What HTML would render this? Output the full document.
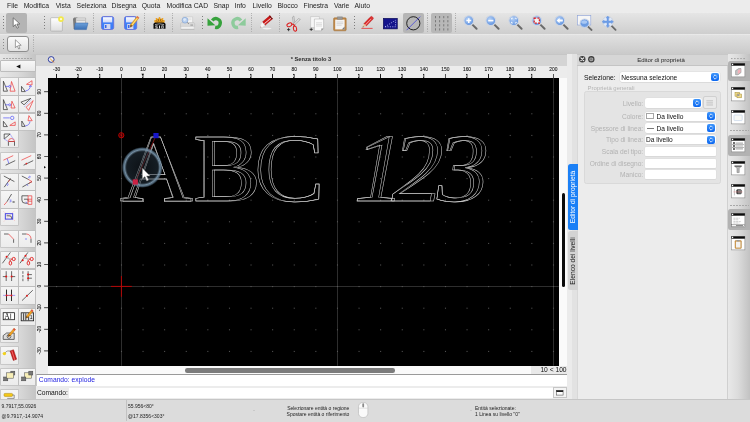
<!DOCTYPE html>
<html lang="it"><head><meta charset="utf-8"><title>Senza titolo 3</title>
<style>
*{margin:0;padding:0;box-sizing:border-box}
html,body{width:750px;height:422px;overflow:hidden;background:#ececec}
body{position:relative;will-change:transform;font-family:"Liberation Sans",sans-serif;color:#1a1a1a;font-size:6.7px;line-height:1}
.a{position:absolute}
.t{position:absolute;white-space:nowrap;line-height:1}
svg{position:absolute;overflow:visible}
.menu span{position:absolute;top:3.4px;font-size:6.8px;color:#222;white-space:nowrap}
.tb{position:absolute;background:linear-gradient(#f5f5f5,#ececec);width:16.5px;height:16.3px;box-shadow:0 0 0 0.7px #bcbcbc}
.sep{position:absolute;width:1px;height:20px;top:13px;background:repeating-linear-gradient(#b2b2b2 0 1.2px,transparent 1.2px 2.2px)}
.sel{position:absolute;background:#b6b6b6;border-radius:2px}
.inp{position:absolute;background:#fff;border-radius:1.5px;box-shadow:0 0 0 0.5px #dcdcdc, 0 0.5px 0.5px #c8c8c8}
.bl{position:absolute;background:linear-gradient(#3f96fb,#0a66f0);border-radius:2px;width:8.2px;height:8px}
.lbl{position:absolute;color:#b2b2b2;font-size:6.6px;text-align:right;white-space:nowrap}
.val{position:absolute;color:#111;font-size:6.6px;white-space:nowrap}
.st{position:absolute;font-size:5px;color:#222;white-space:nowrap}
</style></head>
<body>
<div class="a menu" style="left:0;top:0;width:750px;height:12px;background:#ececec"><span style="left:7px">File</span><span style="left:23.7px">Modifica</span><span style="left:55.7px">Vista</span><span style="left:76.6px">Seleziona</span><span style="left:111.6px">Disegna</span><span style="left:141.7px">Quota</span><span style="left:166.5px">Modifica CAD</span><span style="left:213.5px">Snap</span><span style="left:234.5px">Info</span><span style="left:252.5px">Livello</span><span style="left:277.5px">Blocco</span><span style="left:303.5px">Finestra</span><span style="left:334px">Varie</span><span style="left:354.5px">Aiuto</span></div>
<div class="a" style="left:0;top:12px;width:750px;height:22.4px;background:linear-gradient(#f2f2f2 0,#e5e5e5 5%,#cecece)"></div>
<div class="a" style="left:0;top:34.4px;width:750px;height:19.4px;background:linear-gradient(#eeeeee 0,#e0e0e0 6%,#cacaca)"></div>
<div class="sel" style="left:6px;top:12.6px;width:21.4px;height:20.6px;background:#b4b4b4"></div>
<svg style="left:12px;top:16.5px" width="10" height="12" viewBox="0 0 10 12"><path d="M1.2 0.8v8.8l2.2-2 1.6 3.6 1.5-0.7-1.6-3.5h3z" fill="#fff" stroke="#555" stroke-width="0.7" stroke-linejoin="round"/></svg>
<div class="sep" style="left:93.4px"></div>
<div class="sep" style="left:144.3px"></div>
<div class="sep" style="left:172.3px"></div>
<div class="sep" style="left:250.7px"></div>
<div class="sep" style="left:278.7px"></div>
<div class="sep" style="left:427.0px"></div>
<div class="sep" style="left:455.3px"></div>
<svg style="left:2px;top:16px" width="3" height="14" viewBox="0 0 3 14"><rect x="1" y="0" width="1" height="1" fill="#7e7e7e"/><rect x="1" y="3" width="1" height="1" fill="#7e7e7e"/><rect x="1" y="6" width="1" height="1" fill="#7e7e7e"/><rect x="1" y="9" width="1" height="1" fill="#7e7e7e"/><rect x="1" y="12" width="1" height="1" fill="#7e7e7e"/></svg>
<svg style="left:43px;top:16px" width="3" height="14" viewBox="0 0 3 14"><rect x="1" y="0" width="1" height="1" fill="#7e7e7e"/><rect x="1" y="3" width="1" height="1" fill="#7e7e7e"/><rect x="1" y="6" width="1" height="1" fill="#7e7e7e"/><rect x="1" y="9" width="1" height="1" fill="#7e7e7e"/><rect x="1" y="12" width="1" height="1" fill="#7e7e7e"/></svg>
<svg style="left:201px;top:16px" width="3" height="14" viewBox="0 0 3 14"><rect x="1" y="0" width="1" height="1" fill="#7e7e7e"/><rect x="1" y="3" width="1" height="1" fill="#7e7e7e"/><rect x="1" y="6" width="1" height="1" fill="#7e7e7e"/><rect x="1" y="9" width="1" height="1" fill="#7e7e7e"/><rect x="1" y="12" width="1" height="1" fill="#7e7e7e"/></svg>
<svg style="left:353px;top:16px" width="3" height="14" viewBox="0 0 3 14"><rect x="1" y="0" width="1" height="1" fill="#7e7e7e"/><rect x="1" y="3" width="1" height="1" fill="#7e7e7e"/><rect x="1" y="6" width="1" height="1" fill="#7e7e7e"/><rect x="1" y="9" width="1" height="1" fill="#7e7e7e"/><rect x="1" y="12" width="1" height="1" fill="#7e7e7e"/></svg>
<svg style="left:50.3px;top:15.6px" width="14.4" height="16" viewBox="0 0 13.5 15"><defs><linearGradient id="pg" x1="0" y1="0" x2="0" y2="1"><stop offset="0" stop-color="#ffffff"/><stop offset="1" stop-color="#dedede"/></linearGradient></defs><rect x="0.6" y="1.6" width="11" height="12.6" rx="0.8" fill="url(#pg)" stroke="#a8a8a8" stroke-width="0.6"/><circle cx="10.3" cy="2.9" r="2.7" fill="#f2e84a"/><circle cx="10.3" cy="2.9" r="1.1" fill="#fffbd0"/></svg>
<svg style="left:72px;top:15.6px" width="17" height="15.2" viewBox="0 0.4 17 13.2"><defs><linearGradient id="fo" x1="0" y1="0" x2="0" y2="1"><stop offset="0" stop-color="#6ea2dc"/><stop offset="1" stop-color="#3a6fb4"/></linearGradient></defs><path d="M1 2.2l1.2-1.2h3l1 1v10.5h-4.6z" fill="#7b7b7b"/><path d="M4 1.4h9.6v6h-9.6z" fill="#e6e6e6" stroke="#9a9a9a" stroke-width="0.5"/><path d="M4.4 3h8.8v1.2h-8.8z" fill="#bdbdbd"/><path d="M3.2 6.4h12.8l-1.6 6.6h-12z" fill="url(#fo)" stroke="#3565a6" stroke-width="0.5"/></svg>
<svg style="left:101px;top:15.8px" width="13.2" height="14" viewBox="0 0 13.2 14"><defs><linearGradient id="fl101" x1="0" y1="0" x2="0" y2="1"><stop offset="0" stop-color="#4a84f6"/><stop offset="1" stop-color="#3a7cf8"/></linearGradient><linearGradient id="fw101" x1="0" y1="0" x2="0" y2="1"><stop offset="0" stop-color="#fbfbff"/><stop offset="1" stop-color="#cfd8f8"/></linearGradient></defs><rect x="0.5" y="0.5" width="12.2" height="13" rx="2" fill="url(#fl101)" stroke="#666cd6" stroke-width="0.8"/><rect x="2" y="1.2" width="9.2" height="5.2" fill="url(#fw101)"/><rect x="3.2" y="8" width="6.2" height="5" fill="#d4d8ee"/><rect x="4" y="9" width="1.5" height="3" fill="#3a66e8"/></svg>
<svg style="left:124.1px;top:15.8px" width="13.2" height="14" viewBox="0 0 13.2 14"><defs><linearGradient id="fl124" x1="0" y1="0" x2="0" y2="1"><stop offset="0" stop-color="#4a84f6"/><stop offset="1" stop-color="#3a7cf8"/></linearGradient><linearGradient id="fw124" x1="0" y1="0" x2="0" y2="1"><stop offset="0" stop-color="#fbfbff"/><stop offset="1" stop-color="#cfd8f8"/></linearGradient></defs><rect x="0.5" y="0.5" width="12.2" height="13" rx="2" fill="url(#fl124)" stroke="#666cd6" stroke-width="0.8"/><rect x="2" y="1.2" width="9.2" height="5.2" fill="url(#fw124)"/><rect x="3.2" y="8" width="6.2" height="5" fill="#d4d8ee"/><rect x="4" y="9" width="1.5" height="3" fill="#3a66e8"/></svg>
<svg style="left:128px;top:14.6px" width="12" height="12" viewBox="0 0 12 12"><path d="M9.2 1.2l1.9 1.5-6.6 8.4-2.4 1.2 0.5-2.7z" fill="#f2b224" stroke="#c07818" stroke-width="0.4"/><path d="M9.2 1.2l1.9 1.5-0.9 1.1-1.9-1.5z" fill="#e86a5a"/><path d="M2.1 12.3l0.5-2.7 1.9 1.5z" fill="#6a4a30"/><path d="M9 3l0.7 0.55-5.2 6.6-0.7-0.55z" fill="#fbe08a"/></svg>
<svg style="left:152.5px;top:16px" width="13" height="14" viewBox="0 0 13 14"><path d="M1.6 7.2a4.9 4.4 0 0 1 9.8 0z" fill="#f0a21c"/><path d="M6.5 1.9v4M3.5 2.9l1.8 3.4M9.5 2.9l-1.8 3.4M2 5l2.6 1.6M11 5l-2.6 1.6" stroke="#f0a21c" stroke-width="1.8" stroke-linecap="round"/><path d="M5 2.6l0.8 3M8 2.6l-0.8 3M2.8 4.2l2 2M10.2 4.2l-2 2" stroke="#3a2608" stroke-width="0.45"/><path d="M0.5 8.2q0-1.8 1.8-1.8h8.4q1.8 0 1.8 1.8v4.6h-12z" fill="#0c0c0c"/><path d="M2 8.6q4.5-1.6 9 0" stroke="#cfcfcf" stroke-width="0.7" fill="none"/><path d="M2.4 9.6h2.2v0.8h-1.4v0.6h1.4v1.6h-2.2v-0.7h1.4v-0.5h-1.4zM6 9.6h1v3h-1zM8.4 9.6h2.2v3h-2.2z" fill="#e8e8e8"/><rect x="9.1" y="10.3" width="0.8" height="1.6" fill="#0c0c0c"/></svg>
<svg style="left:179.5px;top:15.5px" width="15" height="15" viewBox="0 0 15 15"><path d="M3.2 0.8h9.4v6.4h-9.4z" fill="#f4f4f4" stroke="#c0c0c0" stroke-width="0.5"/><path d="M7 2.2h4.4M7 3.6h4.4" stroke="#d0d0d0" stroke-width="0.5"/><path d="M1.4 6.6h12.4l0.9 1.2v3h-14.2v-3z" fill="#d9d9d9" stroke="#b4b4b4" stroke-width="0.4"/><path d="M1 10.4h13.2v3h-13.2z" fill="#f0f0f0" stroke="#c4c4c4" stroke-width="0.4"/><path d="M0.8 13.4h13.6" stroke="#b0b0b0" stroke-width="0.7"/><circle cx="5" cy="4.2" r="2.9" fill="#b9d0ee" stroke="#86a6d6" stroke-width="0.7"/><circle cx="4.6" cy="3.6" r="1.3" fill="#dfeaf8"/><path d="M7.2 6.4l1.8 1.6" stroke="#8a8a8a" stroke-width="0.9"/><path d="M10.4 8.4h2.6v1.4h-2.6z" fill="#a8a8a8"/></svg>
<svg style="left:206.5px;top:16px" width="15.5" height="14" viewBox="0 0 15.5 14"><path d="M5.3 4.5A4.4 4.4 0 1 1 8.1 11.4" fill="none" stroke="#36a23c" stroke-width="3.3"/><path d="M0.5 2.2v7.6l7.8-0.6z" fill="#36a23c"/></svg>
<svg style="left:230.5px;top:16px" width="15.5" height="14" viewBox="0 0 15.5 14"><g transform="translate(15.2 0) scale(-1 1)"><path d="M5.3 4.5A4.4 4.4 0 1 1 8.1 11.4" fill="none" stroke="#8ecb9c" stroke-width="3.3"/><path d="M0.5 2.2v7.6l7.8-0.6z" fill="#8ecb9c"/></g></svg>
<svg style="left:259.5px;top:15px" width="14" height="15" viewBox="0 0 14 15"><ellipse cx="7" cy="13.6" rx="4.6" ry="0.8" fill="#f4f4f4" opacity="0.9"/><path d="M12.66 3.8L9.94 0.6 2.3 7.1 5 10.3z" fill="#cc1616" stroke="#9c0e0e" stroke-width="0.4"/><path d="M11.7 1.9l0.6 0.7-7.7 6.5-0.6-0.7z" fill="#fbe4e4"/><path d="M12.66 3.8L9.94 0.6 9.1 1.3 11.8 4.5z" fill="#6a1010"/><path d="M2.3 7.1L5 10.3 2.6 12.2 0.6 12.4 0.4 10z" fill="#f6f6f6" stroke="#cfcfcf" stroke-width="0.3"/><path d="M0.6 12.4l-0.1-1 0.9 0.8z" fill="#8a1a1a"/></svg>
<svg style="left:285.5px;top:14.5px" width="16" height="16.5" viewBox="0 0 16 16.5"><path d="M7.8 1l1.4 9.2-1.4 0.6-1.4-8.6z" fill="#e0e0e0" stroke="#8a8a8a" stroke-width="0.5"/><path d="M14.4 4.4l-6.4 6-0.8-1.2 5.2-5.6z" fill="#e0e0e0" stroke="#8a8a8a" stroke-width="0.5"/><ellipse cx="3.4" cy="9.8" rx="2.6" ry="1.7" transform="rotate(-25 3.4 9.8)" fill="none" stroke="#dc1c1c" stroke-width="1"/><ellipse cx="9" cy="13.6" rx="1.6" ry="2.6" transform="rotate(-10 9 13.6)" fill="none" stroke="#dc1c1c" stroke-width="1"/><path d="M5.6 9l2.2 0.5M8.5 11.2l-0.6-1.8" stroke="#dc1c1c" stroke-width="1.1"/><path d="M1 14.6h3.2M2.6 13v3.2" stroke="#111" stroke-width="0.7"/></svg>
<svg style="left:309px;top:15.5px" width="16" height="15.5" viewBox="0 0 16 15.5"><path d="M1.6 0.6h8.8v11h-8.8z" fill="#f6f6f6" stroke="#b8b8b8" stroke-width="0.5"/><path d="M5.4 3h9.2v9.6l-2.2 2.2h-7z" fill="#fafafa" stroke="#a8a8a8" stroke-width="0.5"/><path d="M14.6 12.6l-2.2 2.2v-2.2z" fill="#888"/><path d="M7 6.8h6M7 8.4h6M7 10h6" stroke="#c8c8c8" stroke-width="0.6"/><path d="M0.6 13.4h3.2M2.2 11.8v3.2" stroke="#111" stroke-width="0.7"/></svg>
<svg style="left:332.5px;top:15.5px" width="14" height="15.5" viewBox="0 0 14 15.5"><rect x="0.6" y="1.8" width="12.6" height="13" rx="1" fill="#c08848" stroke="#9a6a30" stroke-width="0.5"/><path d="M2.2 3.6h9.4v9.8h-9.4z" fill="#f4f4f4"/><path d="M11.6 10.6v2.8h-2.8z" fill="#7a7a7a"/><path d="M4.4 0.8h5v2.6h-5z" fill="#9a9a9a" stroke="#7a7a7a" stroke-width="0.4"/><path d="M3.6 6h6.6M3.6 7.6h6.6M3.6 9.2h5" stroke="#c4c4c4" stroke-width="0.6"/></svg>
<svg style="left:361px;top:15px" width="13" height="15" viewBox="0 0 13 15"><path d="M11.52 4.58L9.08 2.22 2.83 8.69 5.27 11.05z" fill="#dc1e1e" stroke="#a81010" stroke-width="0.4"/><path d="M11.52 4.58L9.08 2.22 9.9 1.5q0.6-0.4 1.2 0.1l1.1 1.1q0.5 0.6 0 1.2z" fill="#e23030" stroke="#a81010" stroke-width="0.3"/><path d="M2.83 8.69L5.27 11.05 1.5 12.5z" fill="#e8c49a"/><path d="M1.5 12.5l0.5-1.3 0.8 0.8z" fill="#4a2a18"/><path d="M9.9 3.4l0.7 0.7-5.9 6.1-0.7-0.7z" fill="#f49a9a"/><path d="M0.4 13.4h11.2" stroke="#e63434" stroke-width="0.8"/></svg>
<svg style="left:382.5px;top:17.8px" width="14.6" height="11.2" viewBox="0 0 14.6 11.2"><rect x="0.3" y="0.3" width="14" height="10.6" fill="#14148c" stroke="#0a0a50" stroke-width="0.6"/><path d="M2 8.8l10.6-6.6M2 8.8h10.6v-6.6" stroke="#c8d0ff" stroke-width="0.7" stroke-dasharray="1.2 1.2" fill="none"/></svg>
<div class="sel" style="left:403px;top:12.6px;width:21px;height:20.6px;background:#b6b6b6"></div>
<svg style="left:405px;top:14.5px" width="17" height="17" viewBox="0 0 17 17"><circle cx="8.3" cy="8.3" r="6.6" fill="none" stroke="#111" stroke-width="0.9"/><path d="M1.6 15.2l13.6-13.6" stroke="#3838e0" stroke-width="0.7"/></svg>
<div class="sel" style="left:431px;top:12.6px;width:21.4px;height:20.6px;background:#b8b8b8"></div>
<svg style="left:431px;top:12.6px" width="21.4" height="20.6" viewBox="0 0 21.4 20.6"><rect x="4.2" y="3.0" width="0.8" height="2.2" fill="#6a6a6a"/><rect x="4.2" y="7.1" width="0.8" height="2.2" fill="#6a6a6a"/><rect x="4.2" y="11.2" width="0.8" height="2.2" fill="#6a6a6a"/><rect x="4.2" y="15.3" width="0.8" height="2.2" fill="#6a6a6a"/><rect x="8.3" y="3.0" width="0.8" height="2.2" fill="#6a6a6a"/><rect x="8.3" y="7.1" width="0.8" height="2.2" fill="#6a6a6a"/><rect x="8.3" y="11.2" width="0.8" height="2.2" fill="#6a6a6a"/><rect x="8.3" y="15.3" width="0.8" height="2.2" fill="#6a6a6a"/><rect x="12.4" y="3.0" width="0.8" height="2.2" fill="#6a6a6a"/><rect x="12.4" y="7.1" width="0.8" height="2.2" fill="#6a6a6a"/><rect x="12.4" y="11.2" width="0.8" height="2.2" fill="#6a6a6a"/><rect x="12.4" y="15.3" width="0.8" height="2.2" fill="#6a6a6a"/><rect x="16.5" y="3.0" width="0.8" height="2.2" fill="#6a6a6a"/><rect x="16.5" y="7.1" width="0.8" height="2.2" fill="#6a6a6a"/><rect x="16.5" y="11.2" width="0.8" height="2.2" fill="#6a6a6a"/><rect x="16.5" y="15.3" width="0.8" height="2.2" fill="#6a6a6a"/></svg>
<svg style="left:462.5px;top:15px" width="15" height="15" viewBox="0 0 15 15"><defs><radialGradient id="lg470" cx="0.4" cy="0.35" r="0.7"><stop offset="0" stop-color="#b4d0f6"/><stop offset="1" stop-color="#5b8fde"/></radialGradient></defs><path d="M9.4 9.6l4.2 4.2" stroke="#6a6a6a" stroke-width="2" stroke-linecap="round"/><circle cx="5.8" cy="5.6" r="4.9" fill="url(#lg470)" stroke="#cfd6e2" stroke-width="1.1"/><path d="M3.4 5.6h4.8M5.8 3.2v4.8" stroke="#fff" stroke-width="1.5"/></svg>
<svg style="left:485.0px;top:15px" width="15" height="15" viewBox="0 0 15 15"><defs><radialGradient id="lg492" cx="0.4" cy="0.35" r="0.7"><stop offset="0" stop-color="#b4d0f6"/><stop offset="1" stop-color="#5b8fde"/></radialGradient></defs><path d="M9.4 9.6l4.2 4.2" stroke="#6a6a6a" stroke-width="2" stroke-linecap="round"/><circle cx="5.8" cy="5.6" r="4.9" fill="url(#lg492)" stroke="#cfd6e2" stroke-width="1.1"/><path d="M3.2 5.6h5.2" stroke="#fff" stroke-width="1.6"/></svg>
<svg style="left:508.0px;top:15px" width="15" height="15" viewBox="0 0 15 15"><defs><radialGradient id="lg515" cx="0.4" cy="0.35" r="0.7"><stop offset="0" stop-color="#b4d0f6"/><stop offset="1" stop-color="#5b8fde"/></radialGradient></defs><path d="M9.4 9.6l4.2 4.2" stroke="#6a6a6a" stroke-width="2" stroke-linecap="round"/><circle cx="5.8" cy="5.6" r="4.9" fill="url(#lg515)" stroke="#cfd6e2" stroke-width="1.1"/><path d="M3.4 4.4v-1.2h1.4M6.8 3.2h1.4v1.2M8.2 6.8v1.2h-1.4M4.8 8h-1.4v-1.2" stroke="#fff" stroke-width="0.9" fill="none"/></svg>
<svg style="left:531.0px;top:15px" width="15" height="15" viewBox="0 0 15 15"><defs><radialGradient id="lg538" cx="0.4" cy="0.35" r="0.7"><stop offset="0" stop-color="#b4d0f6"/><stop offset="1" stop-color="#5b8fde"/></radialGradient></defs><path d="M9.4 9.6l4.2 4.2" stroke="#6a6a6a" stroke-width="2" stroke-linecap="round"/><circle cx="5.8" cy="5.6" r="4.9" fill="url(#lg538)" stroke="#cfd6e2" stroke-width="1.1"/><rect x="3.2" y="3.1" width="5.2" height="5" fill="#f4f4f4" stroke="#e02020" stroke-width="1.3" stroke-dasharray="2 1.2"/></svg>
<svg style="left:554.0px;top:15px" width="15" height="15" viewBox="0 0 15 15"><defs><radialGradient id="lg561" cx="0.4" cy="0.35" r="0.7"><stop offset="0" stop-color="#b4d0f6"/><stop offset="1" stop-color="#5b8fde"/></radialGradient></defs><path d="M9.4 9.6l4.2 4.2" stroke="#6a6a6a" stroke-width="2" stroke-linecap="round"/><circle cx="5.8" cy="5.6" r="4.9" fill="url(#lg561)" stroke="#cfd6e2" stroke-width="1.1"/><path d="M2.6 5.6l3-2.6v1.6h3.2v2h-3.2v1.6z" fill="#fff"/></svg>
<svg style="left:576.5px;top:14.5px" width="16" height="16" viewBox="0 0 16 16"><rect x="0.4" y="0.6" width="13.4" height="9.4" fill="#f6f6f6" stroke="#8aa0d8" stroke-width="0.6"/><path d="M11 11.6l3.6 3.4" stroke="#6a6a6a" stroke-width="1.8" stroke-linecap="round"/><ellipse cx="7.6" cy="8.2" rx="4.6" ry="4.2" fill="#6c9ce2" stroke="#d0d8e8" stroke-width="1"/><ellipse cx="7.2" cy="7" rx="3" ry="1.8" fill="#a8c8f4"/></svg>
<svg style="left:600.5px;top:14.5px" width="16" height="16" viewBox="0 0 16 16"><path d="M10.6 10.8l4 4" stroke="#6a6a6a" stroke-width="1.8" stroke-linecap="round"/><circle cx="6.8" cy="6.8" r="5.3" fill="#dfe9f8" stroke="#c4ccd8" stroke-width="0.7"/><path d="M6.8 1l1.7 2h-0.9v2.9h2.9v-0.9l2 1.8-2 1.8v-0.9h-2.9v2.9h0.9l-1.7 2-1.7-2h0.9v-2.9h-2.9v0.9l-2-1.8 2-1.8v0.9h2.9v-2.9h-0.9z" fill="#6e9ee8" stroke="#5584d2" stroke-width="0.3"/></svg>
<svg style="left:2px;top:39px" width="3" height="12" viewBox="0 0 3 12"><rect x="1" y="0" width="1" height="1" fill="#8a8a8a"/><rect x="1" y="3" width="1" height="1" fill="#8a8a8a"/><rect x="1" y="6" width="1" height="1" fill="#8a8a8a"/><rect x="1" y="9" width="1" height="1" fill="#8a8a8a"/></svg>
<div class="sep" style="left:32.6px;top:35px;height:18.4px"></div>
<div class="a" style="left:7.2px;top:36.2px;width:21.6px;height:15.8px;border:0.9px solid #8e8e8e;border-radius:3px;background:linear-gradient(#fafafa,#e2e2e2)"></div>
<svg style="left:13.6px;top:38.6px" width="9" height="11" viewBox="0 0 9 11"><path d="M1.4 0.8v7.8l1.9-1.7 1.4 3.1 1.3-0.6-1.4-3.1h2.6z" fill="#fff" stroke="#666" stroke-width="0.6" stroke-linejoin="round"/></svg>
<div class="a" style="left:0;top:54px;width:36px;height:345px;background:linear-gradient(90deg,#e6e6e6,#dadada 50%,#c4c4c4)"></div>
<div class="a" style="left:3px;top:58px;width:30px;height:1px;background:repeating-linear-gradient(90deg,#a6a6a6 0 1.9px,transparent 1.9px 3px)"></div>
<div class="a" style="left:0.2px;top:60.3px;width:35.4px;height:11.9px;background:linear-gradient(#f8f8f8,#e8e8e8);border:0.6px solid #bdbdbd;border-radius:1px"></div>
<svg style="left:15.6px;top:64px" width="5" height="5" viewBox="0 0 5 5"><path d="M0.2 2.4l4.2-2v4z" fill="#111"/></svg>
<div class="tb" style="left:1.1px;top:78.4px"></div><svg style="left:1px;top:77.9px" width="17" height="17" viewBox="0 0 17 17" fill="none" stroke-linecap="butt"><path d="M2.4 3.2v10h4.1z" stroke="#2c2c2c" stroke-width="0.7"/><path d="M10.5 3.5l3.6 9.7h-5z" stroke="#ee3838" stroke-width="0.7"/><path d="M4.4 8.4h3.4" stroke="#5656f6" stroke-width="0.7"/><circle cx="8.7" cy="8.4" r="1" stroke="#5656f6" stroke-width="0.7"/></svg>
<div class="tb" style="left:18.700000000000003px;top:78.4px"></div><svg style="left:18.6px;top:77.9px" width="17" height="17" viewBox="0 0 17 17" fill="none" stroke-linecap="butt"><path d="M2.5 8.4v5.2h3.8z" stroke="#2c2c2c" stroke-width="0.7"/><path d="M7.5 6.3l5.5-3.6v4.3z" stroke="#ee3838" stroke-width="0.7"/><path d="M6.4 13c3.2-0.4 4.8-2.6 5-5" stroke="#5656f6" stroke-width="0.7" stroke-width="1"/><path d="M10.2 9l1.2-1.8 1.2 1.8" stroke="#5656f6" stroke-width="0.7" stroke-width="0.6"/></svg>
<div class="tb" style="left:1.1px;top:96.0px"></div><svg style="left:1px;top:95.5px" width="17" height="17" viewBox="0 0 17 17" fill="none" stroke-linecap="butt"><path d="M2.4 3.6v10h4.1z" stroke="#2c2c2c" stroke-width="0.7"/><path d="M10.9 5.2l3.2 6.8h-4z" stroke="#ee3838" stroke-width="0.7"/><path d="M4.4 8.8h3.4" stroke="#5656f6" stroke-width="0.7"/><circle cx="8.7" cy="8.8" r="1" stroke="#5656f6" stroke-width="0.7"/></svg>
<div class="tb" style="left:18.700000000000003px;top:96.0px"></div><svg style="left:18.6px;top:95.5px" width="17" height="17" viewBox="0 0 17 17" fill="none" stroke-linecap="butt"><path d="M1.9 6.2l9.9-3.8-6.8 6.4z" stroke="#2c2c2c" stroke-width="0.7"/><path d="M14.2 4.6l-7.1 6.6 2.6 3.2z" stroke="#ee3838" stroke-width="0.7"/><path d="M5.4 10.9l7.5-8" stroke="#8a8af8" stroke-width="0.6" stroke-dasharray="1.4 0.8"/></svg>
<div class="tb" style="left:1.1px;top:113.6px"></div><svg style="left:1px;top:113.1px" width="17" height="17" viewBox="0 0 17 17" fill="none" stroke-linecap="butt"><path d="M2.2 4.9h6.6" stroke="#5656f6" stroke-width="0.7"/><circle cx="11.2" cy="4.9" r="1.7" stroke="#5656f6" stroke-width="0.7"/><path d="M2.4 8.3v5.3h4z" stroke="#2c2c2c" stroke-width="0.7"/><path d="M14.2 8.9v3.5h-5.4z" stroke="#ee3838" stroke-width="0.7"/></svg>
<div class="tb" style="left:18.700000000000003px;top:113.6px"></div><svg style="left:18.6px;top:113.1px" width="17" height="17" viewBox="0 0 17 17" fill="none" stroke-linecap="butt"><path d="M2.8 8v5.4h3.3z" stroke="#2c2c2c" stroke-width="0.7"/><path d="M9.9 2.6l3.3 5.1h-4.2z" stroke="#ee3838" stroke-width="0.7"/><path d="M6.3 12.9c2.8-0.3 4.5-2 4.7-4.5" stroke="#5656f6" stroke-width="0.7" stroke-width="1"/></svg>
<div class="tb" style="left:1.1px;top:131.0px"></div><svg style="left:1px;top:130.5px" width="17" height="17" viewBox="0 0 17 17" fill="none" stroke-linecap="butt"><path d="M3.2 8v-5h5.9M9.1 3l-5.9 5" stroke="#2c2c2c" stroke-width="0.7"/><path d="M7.4 14.8v-4.3h6.1v4.3" stroke="#2c2c2c" stroke-width="0.7" stroke-width="0.8"/><path d="M7.4 10.5a3.05 3 0 0 1 6.1 0z" stroke="#ee3838" stroke-width="0.7"/><path d="M9.1 3l3.6 5.8M3.2 8l4.2 2.5" stroke="#8a8af8" stroke-width="0.6"/></svg>
<div class="tb" style="left:1.1px;top:152.5px"></div><svg style="left:1px;top:152.0px" width="17" height="17" viewBox="0 0 17 17" fill="none" stroke-linecap="butt"><path d="M2.4 8.2l9.8-4.6" stroke="#ee3838" stroke-width="0.7"/><path d="M4.6 13.2l9.6-4.6" stroke="#2c2c2c" stroke-width="0.7"/><path d="M6.2 6.6l1.6 4.8" stroke="#5656f6" stroke-width="0.7"/></svg>
<div class="tb" style="left:18.700000000000003px;top:152.5px"></div><svg style="left:18.6px;top:152.0px" width="17" height="17" viewBox="0 0 17 17" fill="none" stroke-linecap="butt"><path d="M2.4 8.2l9.8-4.6" stroke="#ee3838" stroke-width="0.7"/><path d="M4.6 13.2l9.6-4.6" stroke="#2c2c2c" stroke-width="0.7"/><circle cx="7.4" cy="11.6" r="0.9" fill="#e02828"/></svg>
<div class="tb" style="left:1.1px;top:173.6px"></div><svg style="left:1px;top:173.1px" width="17" height="17" viewBox="0 0 17 17" fill="none" stroke-linecap="butt"><path d="M2.8 3l10.6 5.6" stroke="#2c2c2c" stroke-width="0.7"/><path d="M9.6 5.4l-6.4 8.8" stroke="#2c2c2c" stroke-width="0.7"/><path d="M8.8 6.8l-1.4 2" stroke="#ee3838" stroke-width="0.7" stroke-width="1.2"/><path d="M6 10.4l1.6 1M5.4 11.6l1.6 1" stroke="#5656f6" stroke-width="0.7"/></svg>
<div class="tb" style="left:18.700000000000003px;top:173.6px"></div><svg style="left:18.6px;top:173.1px" width="17" height="17" viewBox="0 0 17 17" fill="none" stroke-linecap="butt"><path d="M2.8 3l7 3.6" stroke="#2c2c2c" stroke-width="0.7"/><path d="M13 8.6l-9.6 5.4" stroke="#2c2c2c" stroke-width="0.7"/><path d="M9.6 6.6l3.4 2-3 1.6" stroke="#ee3838" stroke-width="0.7"/><path d="M9 4l1.8 1M7.6 11.6l1.6 1M10 3l1.8 1" stroke="#5656f6" stroke-width="0.7"/></svg>
<div class="tb" style="left:1.1px;top:191.3px"></div><svg style="left:1px;top:190.8px" width="17" height="17" viewBox="0 0 17 17" fill="none" stroke-linecap="butt"><path d="M10.6 3l-4.7 7.8" stroke="#2c2c2c" stroke-width="0.7"/><path d="M5.9 10.8l-2.8 3.2" stroke="#ee3838" stroke-width="0.7"/><path d="M8.6 8.6l1.8 0.6-1.6 0.8 1.6 0.4-1.8 0.8" stroke="#7a7af8" stroke-width="0.6"/><path d="M11.8 10.2l1.6 1.6M13.4 10.2l-1.6 1.6" stroke="#2c2c2c" stroke-width="0.7" stroke-width="0.5"/></svg>
<div class="tb" style="left:18.700000000000003px;top:191.3px"></div><svg style="left:18.6px;top:190.8px" width="17" height="17" viewBox="0 0 17 17" fill="none" stroke-linecap="butt"><path d="M9.1 4.8h-6.2v4.2a3.2 3.2 0 0 0 3.2 3.2h3M5 8.2h4.1v2" stroke="#2c2c2c" stroke-width="0.7" stroke-width="0.8"/><path d="M9.1 4.8h3.7v8.6h-3.7zM9.1 8.2h3.7M9.1 10.2h3.7" stroke="#ee3838" stroke-width="0.7"/><path d="M6.6 11l1.4 0.5-1.2 0.5" stroke="#7a7af8" stroke-width="0.6"/></svg>
<div class="tb" style="left:1.1px;top:208.9px"></div><svg style="left:1px;top:208.4px" width="17" height="17" viewBox="0 0 17 17" fill="none" stroke-linecap="butt"><path d="M2.4 3.4l11.6 9.6M13.6 2.8l-11 11" stroke="#f4a4a4" stroke-width="0.5" stroke-dasharray="1.4 0.9"/><rect x="4.3" y="5.7" width="7.4" height="5.4" stroke="#3434e4" stroke-width="0.9"/><path d="M5.6 7.8h3a2 2 0 0 1 2 2v1" stroke="#2c2c2c" stroke-width="0.7"/></svg>
<div class="tb" style="left:1.1px;top:230.6px"></div><svg style="left:1px;top:230.1px" width="17" height="17" viewBox="0 0 17 17" fill="none" stroke-linecap="butt"><path d="M3 4h4.6M12.6 9.2v3.6" stroke="#2c2c2c" stroke-width="0.7" stroke-width="0.8"/><path d="M7.6 4l5 5.2" stroke="#ee3838" stroke-width="0.7"/></svg>
<div class="tb" style="left:18.700000000000003px;top:230.6px"></div><svg style="left:18.6px;top:230.1px" width="17" height="17" viewBox="0 0 17 17" fill="none" stroke-linecap="butt"><path d="M3 4h4.4M12 8.8v4" stroke="#2c2c2c" stroke-width="0.7" stroke-width="0.8"/><path d="M7.4 4a4.6 4.8 0 0 1 4.6 4.8" stroke="#ee3838" stroke-width="0.7"/><circle cx="7" cy="9" r="0.7" fill="#6a6af8"/></svg>
<div class="tb" style="left:1.1px;top:251.9px"></div><svg style="left:1px;top:251.4px" width="17" height="17" viewBox="0 0 17 17" fill="none" stroke-linecap="butt"><path d="M9.4 1.4l-8 10.9" stroke="#2c2c2c" stroke-width="0.7" stroke-width="0.6"/><path d="M3.6 6.9l6.6 1.2M6.6 5.2l2.8 4.8" stroke="#b8b8b8" stroke-width="0.9"/><circle cx="12.7" cy="8" r="1.6" stroke="#e02020" stroke-width="0.9"/><ellipse cx="9.4" cy="12.1" rx="1.3" ry="1.9" stroke="#e02020" stroke-width="0.9"/><path d="M9.6 8.2l1.6 0M9.2 9.2l0.2 1.2" stroke="#e02020" stroke-width="0.9"/><circle cx="5.6" cy="5.8" r="1" fill="#e81818"/></svg>
<div class="tb" style="left:18.700000000000003px;top:251.9px"></div><svg style="left:18.6px;top:251.4px" width="17" height="17" viewBox="0 0 17 17" fill="none" stroke-linecap="butt"><path d="M8.9 1.4l-8 10.9" stroke="#2c2c2c" stroke-width="0.7" stroke-width="0.6"/><path d="M3.6 6.9l6.6 1.2M6.6 5.2l2.8 4.8" stroke="#b8b8b8" stroke-width="0.9"/><circle cx="12.7" cy="8" r="1.6" stroke="#e02020" stroke-width="0.9"/><ellipse cx="9.4" cy="12.1" rx="1.3" ry="1.9" stroke="#e02020" stroke-width="0.9"/><path d="M9.6 8.2l1.6 0M9.2 9.2l0.2 1.2" stroke="#e02020" stroke-width="0.9"/><circle cx="6.5" cy="4.8" r="1" fill="#e81818"/><circle cx="3.7" cy="9.3" r="1" fill="#e81818"/></svg>
<div class="tb" style="left:1.1px;top:269.6px"></div><svg style="left:1px;top:269.1px" width="17" height="17" viewBox="0 0 17 17" fill="none" stroke-linecap="butt"><path d="M5.2 2.2v9.8M10.6 2.2v9.8" stroke="#2c2c2c" stroke-width="0.7" stroke-width="0.7"/><path d="M1.8 7.6h3.4M10.6 7.6h3.6" stroke="#2c2c2c" stroke-width="0.7" stroke-width="0.8"/><path d="M5.2 7.6h5.4" stroke="#d4d4d4" stroke-width="0.7"/><circle cx="5.2" cy="7.6" r="1" fill="#e81818"/><circle cx="10.6" cy="7.6" r="1" fill="#e81818"/></svg>
<div class="tb" style="left:18.700000000000003px;top:269.6px"></div><svg style="left:18.6px;top:269.1px" width="17" height="17" viewBox="0 0 17 17" fill="none" stroke-linecap="butt"><path d="M3.9 2.2v2.6M3.9 6v2.4M3.9 9.6v2.6M9.1 2.2v10" stroke="#2c2c2c" stroke-width="0.7" stroke-width="0.7"/><path d="M9.1 5.6h3.8M9.1 9.2h3.8" stroke="#2c2c2c" stroke-width="0.7" stroke-width="0.8"/><circle cx="9.1" cy="5.6" r="1" fill="#e81818"/><circle cx="9.1" cy="9.2" r="1" fill="#e81818"/></svg>
<div class="tb" style="left:1.1px;top:287.4px"></div><svg style="left:1px;top:286.9px" width="17" height="17" viewBox="0 0 17 17" fill="none" stroke-linecap="butt"><path d="M5.5 2.6v11.4M10.5 2.6v11.4" stroke="#161616" stroke-width="0.9"/><path d="M2.2 8.4h12" stroke="#8a8af8" stroke-width="0.8"/><path d="M5.5 8.4h5" stroke="#ee3838" stroke-width="0.7" stroke-width="0.9"/><circle cx="5.5" cy="8.4" r="0.9" fill="#e81818"/><circle cx="10.5" cy="8.4" r="0.9" fill="#e81818"/></svg>
<div class="tb" style="left:18.700000000000003px;top:287.4px"></div><svg style="left:18.6px;top:286.9px" width="17" height="17" viewBox="0 0 17 17" fill="none" stroke-linecap="butt"><path d="M3 13.6l10.8-10.4" stroke="#2c2c2c" stroke-width="0.7" stroke-width="0.7"/><circle cx="8" cy="8.8" r="1" fill="#e02020"/></svg>
<div class="tb" style="left:1.1px;top:308.8px"></div><svg style="left:1px;top:308.3px" width="17" height="17" viewBox="0 0 17 17" fill="none" stroke-linecap="butt"><rect x="2.2" y="4.7" width="11.4" height="7" stroke="#1c1c1c" stroke-width="0.8" fill="#fff"/><path d="M9.6 5.6v5.2" stroke="#2c2c2c" stroke-width="0.7" stroke-width="0.6"/><text x="3.2" y="10.9" font-family="Liberation Serif, serif" font-size="7.6" fill="#111" stroke="none">A</text></svg>
<div class="tb" style="left:18.700000000000003px;top:308.8px"></div><svg style="left:18.6px;top:308.3px" width="17" height="17" viewBox="0 0 17 17" fill="none" stroke-linecap="butt"><rect x="2.2" y="4.8" width="12.4" height="8" stroke="#1c1c1c" stroke-width="0.8" fill="#e2e2e2"/><path d="M4.6 5.2v7.2M6.8 5.2v7.2M9.6 5.2v7.2" stroke="#333" stroke-width="0.9"/><text x="10.8" y="11.4" font-family="Liberation Sans, sans-serif" font-size="5" fill="#111" stroke="none">1</text><path d="M12.8 1.6l1.5 1.3-5.2 6.3-2.1 0.9 0.5-2.2z" fill="#f0a422" stroke="#a86010" stroke-width="0.4"/><path d="M12.8 1.6l1.5 1.3-1 1.2-1.5-1.3z" fill="#e04848" stroke="none"/><path d="M7 10.1l0.5-2.2 1.6 1.3z" fill="#5a3c20" stroke="none"/></svg>
<div class="tb" style="left:1.1px;top:326.2px"></div><svg style="left:1px;top:325.7px" width="17" height="17" viewBox="0 0 17 17" fill="none" stroke-linecap="butt"><path d="M2.2 9.6l3.4-2.6h7.6v6.4h-11z" stroke="#333" stroke-width="0.7" fill="#dedede"/><circle cx="8" cy="10.4" r="1.9" stroke="#333" stroke-width="0.7" fill="#f6f6f6"/><g transform="translate(0.2 0.6)"><path d="M12.8 1.6l1.5 1.3-5.2 6.3-2.1 0.9 0.5-2.2z" fill="#f0a422" stroke="#a86010" stroke-width="0.4"/><path d="M12.8 1.6l1.5 1.3-1 1.2-1.5-1.3z" fill="#e04848" stroke="none"/><path d="M7 10.1l0.5-2.2 1.6 1.3z" fill="#5a3c20" stroke="none"/></g></svg>
<div class="tb" style="left:1.1px;top:347.4px"></div><svg style="left:1px;top:346.9px" width="17" height="17" viewBox="0 0 17 17" fill="none" stroke-linecap="butt"><path d="M4 6c1.4-2.2 3.6-2.6 5.6-1.6" stroke="#777" stroke-width="0.7"/><path d="M9.1 3.9l3.4-1.1 3.1 9.4-3.3 1.2z" fill="#cc1c1c" stroke="#8a1010" stroke-width="0.5"/><path d="M10.3 3.8l0.9-0.3 3 9.3-0.9 0.3z" fill="#ee6a6a" stroke="none"/><circle cx="3.4" cy="6.6" r="1.7" fill="#f2d21c" stroke="none"/></svg>
<div class="tb" style="left:1.1px;top:368.7px"></div><svg style="left:1px;top:368.2px" width="17" height="17" viewBox="0 0 17 17" fill="none" stroke-linecap="butt"><rect x="9.8" y="3.2" width="4" height="3.8" fill="#777" stroke="#444" stroke-width="0.5"/><rect x="2.6" y="9" width="4.2" height="3.8" fill="#777" stroke="#444" stroke-width="0.5"/><rect x="5.6" y="4.8" width="7" height="5.4" fill="#f8efb8" stroke="#555" stroke-width="0.55"/></svg>
<div class="tb" style="left:18.700000000000003px;top:368.7px"></div><svg style="left:18.6px;top:368.2px" width="17" height="17" viewBox="0 0 17 17" fill="none" stroke-linecap="butt"><rect x="5.6" y="4.8" width="7" height="5.4" fill="#f8efb8" stroke="#555" stroke-width="0.55"/><rect x="9.8" y="3.2" width="4" height="3.8" fill="#777" stroke="#444" stroke-width="0.5"/><rect x="2.6" y="9" width="4.2" height="3.8" fill="#777" stroke="#444" stroke-width="0.5"/></svg>
<div class="a" style="left:0;top:389px;width:36px;height:9.8px;overflow:hidden"><div class="tb" style="left:1px;top:1px"></div><svg style="left:1px;top:1px" width="17" height="17" viewBox="0 0 17 17"><rect x="3" y="3.4" width="8.6" height="3" rx="1" fill="#f4c818" stroke="#a8860c" stroke-width="0.5"/><path d="M11.6 5h1.6v3.4h-7" stroke="#555" stroke-width="0.6" fill="none"/></svg></div>
<div class="a" style="left:36px;top:54px;width:531px;height:12px;background:#d4d4d4;border-top:0.6px solid #c6c6c6"></div>
<div class="t" style="left:270px;width:82px;text-align:center;top:57.2px;font-size:5.7px;font-weight:bold;color:#2a2a2a">* Senza titolo 3</div>
<div class="a" style="left:36px;top:66px;width:531px;height:12px;background:#ececec"></div>
<div class="a" style="left:36px;top:78px;width:12px;height:296.4px;background:#ececec"></div>
<div class="a" style="left:48px;top:78px;width:510.7px;height:287.7px;background:#000"></div>
<svg style="left:0;top:0" width="750" height="422" viewBox="0 0 750 422"><g font-family="Liberation Sans, sans-serif" font-size="4.9" fill="#1c1c1c" stroke="#1c1c1c" stroke-width="0.1" text-anchor="middle"><rect x="56.25" y="74" width="0.7" height="4" fill="#222"/><text x="56.60" y="71.1">-30</text><rect x="77.85" y="74" width="0.7" height="4" fill="#222"/><text x="78.20" y="71.1">-20</text><rect x="99.45" y="74" width="0.7" height="4" fill="#222"/><text x="99.80" y="71.1">-10</text><rect x="121.05" y="74" width="0.7" height="4" fill="#222"/><text x="121.40" y="71.1">0</text><rect x="142.65" y="74" width="0.7" height="4" fill="#222"/><text x="143.00" y="71.1">10</text><rect x="164.25" y="74" width="0.7" height="4" fill="#222"/><text x="164.60" y="71.1">20</text><rect x="185.85" y="74" width="0.7" height="4" fill="#222"/><text x="186.20" y="71.1">30</text><rect x="207.45" y="74" width="0.7" height="4" fill="#222"/><text x="207.80" y="71.1">40</text><rect x="229.05" y="74" width="0.7" height="4" fill="#222"/><text x="229.40" y="71.1">50</text><rect x="250.65" y="74" width="0.7" height="4" fill="#222"/><text x="251.00" y="71.1">60</text><rect x="272.25" y="74" width="0.7" height="4" fill="#222"/><text x="272.60" y="71.1">70</text><rect x="293.85" y="74" width="0.7" height="4" fill="#222"/><text x="294.20" y="71.1">80</text><rect x="315.45" y="74" width="0.7" height="4" fill="#222"/><text x="315.80" y="71.1">90</text><rect x="337.05" y="74" width="0.7" height="4" fill="#222"/><text x="337.40" y="71.1">100</text><rect x="358.65" y="74" width="0.7" height="4" fill="#222"/><text x="359.00" y="71.1">110</text><rect x="380.25" y="74" width="0.7" height="4" fill="#222"/><text x="380.60" y="71.1">120</text><rect x="401.85" y="74" width="0.7" height="4" fill="#222"/><text x="402.20" y="71.1">130</text><rect x="423.45" y="74" width="0.7" height="4" fill="#222"/><text x="423.80" y="71.1">140</text><rect x="445.05" y="74" width="0.7" height="4" fill="#222"/><text x="445.40" y="71.1">150</text><rect x="466.65" y="74" width="0.7" height="4" fill="#222"/><text x="467.00" y="71.1">160</text><rect x="488.25" y="74" width="0.7" height="4" fill="#222"/><text x="488.60" y="71.1">170</text><rect x="509.85" y="74" width="0.7" height="4" fill="#222"/><text x="510.20" y="71.1">180</text><rect x="531.45" y="74" width="0.7" height="4" fill="#222"/><text x="531.80" y="71.1">190</text><rect x="553.05" y="74" width="0.7" height="4" fill="#222"/><text x="553.40" y="71.1">200</text><rect x="44.2" y="350.55" width="3.8" height="0.7" fill="#222"/><text transform="translate(41.1 350.90) rotate(-90)" x="0" y="0">-30</text><rect x="44.2" y="328.95" width="3.8" height="0.7" fill="#222"/><text transform="translate(41.1 329.30) rotate(-90)" x="0" y="0">-20</text><rect x="44.2" y="307.35" width="3.8" height="0.7" fill="#222"/><text transform="translate(41.1 307.70) rotate(-90)" x="0" y="0">-10</text><rect x="44.2" y="285.75" width="3.8" height="0.7" fill="#222"/><text transform="translate(41.1 286.10) rotate(-90)" x="0" y="0">0</text><rect x="44.2" y="264.15" width="3.8" height="0.7" fill="#222"/><text transform="translate(41.1 264.50) rotate(-90)" x="0" y="0">10</text><rect x="44.2" y="242.55" width="3.8" height="0.7" fill="#222"/><text transform="translate(41.1 242.90) rotate(-90)" x="0" y="0">20</text><rect x="44.2" y="220.95" width="3.8" height="0.7" fill="#222"/><text transform="translate(41.1 221.30) rotate(-90)" x="0" y="0">30</text><rect x="44.2" y="199.35" width="3.8" height="0.7" fill="#222"/><text transform="translate(41.1 199.70) rotate(-90)" x="0" y="0">40</text><rect x="44.2" y="177.75" width="3.8" height="0.7" fill="#222"/><text transform="translate(41.1 178.10) rotate(-90)" x="0" y="0">50</text><rect x="44.2" y="156.15" width="3.8" height="0.7" fill="#222"/><text transform="translate(41.1 156.50) rotate(-90)" x="0" y="0">60</text><rect x="44.2" y="134.55" width="3.8" height="0.7" fill="#222"/><text transform="translate(41.1 134.90) rotate(-90)" x="0" y="0">70</text><rect x="44.2" y="112.95" width="3.8" height="0.7" fill="#222"/><text transform="translate(41.1 113.30) rotate(-90)" x="0" y="0">80</text><rect x="44.2" y="91.35" width="3.8" height="0.7" fill="#222"/><text transform="translate(41.1 91.70) rotate(-90)" x="0" y="0">90</text></g><path d="M141.4 73.8h2.6l-1.3 2z" fill="#111"/><path d="M44 166v2.6l2-1.3z" fill="#111"/><g><circle cx="51.2" cy="59.5" r="2.9" fill="#ececf2" stroke="#24349a" stroke-width="0.95"/><path d="M50.2 58.8l3.4 3.2" stroke="#e8a020" stroke-width="1"/><path d="M53 61.4l0.9 0.9" stroke="#d06048" stroke-width="0.9"/></g><defs><clipPath id="cv"><rect x="48" y="78" width="510.7" height="287.7"/></clipPath><pattern id="gd" x="120.95" y="286.10" width="21.6" height="21.6" patternUnits="userSpaceOnUse"><rect x="0" y="0" width="1" height="1" fill="#5e5e5e"/></pattern><radialGradient id="cur" cx="0.5" cy="0.5" r="0.5"><stop offset="0" stop-color="#1c2630" stop-opacity="0.45"/><stop offset="0.76" stop-color="#2a3a48" stop-opacity="0.5"/><stop offset="0.86" stop-color="#7c98ae" stop-opacity="0.92"/><stop offset="0.93" stop-color="#64829a" stop-opacity="0.7"/><stop offset="1" stop-color="#4a6478" stop-opacity="0"/></radialGradient></defs><g clip-path="url(#cv)"><rect x="121.00" y="78" width="0.8" height="288" fill="#3a3a3a"/><rect x="337.00" y="78" width="0.8" height="288" fill="#3a3a3a"/><rect x="553.00" y="78" width="0.8" height="288" fill="#3a3a3a"/><rect x="48" y="286.00" width="511" height="0.8" fill="#3a3a3a"/><rect x="48" y="78" width="511" height="288" fill="url(#gd)"/><path d="M111.0 286.4h20.8M121.4 276.0v20.8" stroke="#c40000" stroke-width="0.9" fill="none"/><g font-family="Liberation Serif, serif" fill="none" stroke="#d4d4d4" stroke-width="0.48"><text transform="translate(122.0 200.6) scale(1.0 1)" font-size="96.5">A</text><text transform="translate(119.4 200.6) scale(1.06 1)" font-size="96.5">A</text><text transform="translate(193.0 200.6) scale(0.97 1)" font-size="96.5">B</text><text transform="translate(192.9 200.6) scale(1.063 1)" font-size="96.5">B</text><text transform="translate(256.6 200.6) scale(1.06 1)" font-size="96.5">C</text><text transform="translate(253.5 200.6) scale(1.113 1)" font-size="96.5">C</text><text transform="translate(353.5 200.6) scale(1.0 1)" font-size="96.5" font-style="italic">1</text><text transform="translate(353.5 200.6) scale(1.09 1)" font-size="96.5" font-style="italic">1</text><text transform="translate(391.5 200.6) scale(1.0 1)" font-size="96.5" font-style="italic">2</text><text transform="translate(391.5 200.6) scale(1.09 1)" font-size="96.5" font-style="italic">2</text><text transform="translate(437.0 200.6) scale(1.0 1)" font-size="96.5" font-style="italic">3</text><text transform="translate(437.0 200.6) scale(1.09 1)" font-size="96.5" font-style="italic">3</text></g><path d="M156 135.6L135.3 182" stroke="#8c1616" stroke-width="0.8" fill="none"/><g stroke="#d00000" stroke-width="0.6" fill="none"><circle cx="121.3" cy="135.3" r="2.6" stroke-width="0.9"/><path d="M118.7 135.3h5.2M121.3 132.7v5.2M119.5 133.5l3.6 3.6M123.1 133.5l-3.6 3.6" stroke-width="0.45"/></g><circle cx="142.3" cy="167.4" r="20.5" fill="url(#cur)"/><rect x="153.4" y="133" width="5.2" height="5.2" fill="#1616c8"/><rect x="132.7" y="179.4" width="5.2" height="5.2" fill="#cc2244"/><path d="M142.4 168.2v10.6l2.5-2.2 1.9 4.3 1.7-0.8-1.9-4.2h3.4z" fill="#fff" stroke="#888" stroke-width="0.5" stroke-linejoin="round"/></g></svg>
<div class="a" style="left:558.7px;top:78px;width:8.3px;height:288px;background:#fafafa"></div>
<div class="a" style="left:561.8px;top:192.5px;width:3.6px;height:94px;background:#0a0a0a;border-radius:2px"></div>
<div class="a" style="left:47.6px;top:365.7px;width:519.4px;height:8.6px;background:#fafafa"></div>
<div class="a" style="left:184.7px;top:368.2px;width:210.3px;height:4.4px;background:#7c7c7c;border-radius:2.2px"></div>
<div class="a" style="left:531px;top:365.7px;width:36px;height:8.6px;background:#e9e9e9"></div>
<div class="t" style="left:531px;width:35.6px;text-align:right;top:367.4px;font-size:6.7px;color:#111">10 &lt; 100</div>
<div class="a" style="left:36px;top:374.2px;width:531px;height:11.4px;background:#fff;border-top:0.8px solid #9a9a9a;border-left:0.5px solid #c8c8c8"></div>
<div class="t" style="left:38.8px;top:377px;font-size:6.7px;color:#1c1ce0">Comando: explode</div>
<div class="a" style="left:36px;top:385.6px;width:531px;height:13px;background:#ececec"></div>
<div class="t" style="left:37px;top:389.8px;font-size:6.7px;color:#111">Comando:</div>
<div class="a" style="left:69px;top:387.8px;width:484px;height:9.8px;background:#fff"></div>
<div class="a" style="left:553.3px;top:386.6px;width:13.5px;height:11.6px;background:#f4f4f4;border:0.5px solid #c6c6c6"></div>
<svg style="left:556.4px;top:389.8px" width="7.4" height="5.4" viewBox="0 0 7.4 5.4"><rect x="0.3" y="0.3" width="6.8" height="4.8" fill="#fff" stroke="#555" stroke-width="0.6"/><rect x="0.3" y="0.3" width="6.8" height="1.7" fill="#222"/></svg>
<div class="a" style="left:567px;top:54px;width:5px;height:345px;background:#ebebeb"></div>
<div class="a" style="left:572px;top:54px;width:5px;height:345px;background:#e2e2e2"></div>
<div class="a" style="left:567.6px;top:163.5px;width:10.4px;height:66px;background:#1b80f6;border-radius:2.5px 0 0 2.5px;z-index:2"></div>
<div class="t" style="left:572.6px;top:196.6px;font-size:6.65px;color:#fff;z-index:3;transform:translate(-50%,-50%) rotate(-90deg)">Editor di proprietà</div>
<div class="a" style="left:567.6px;top:231.4px;width:10.4px;height:58.8px;background:#d3d3d3;border-radius:2.5px 0 0 2.5px;z-index:2"></div>
<div class="t" style="left:572.6px;top:261px;font-size:6.65px;color:#222;z-index:3;transform:translate(-50%,-50%) rotate(-90deg)">Elenco dei livelli</div>
<div class="a" style="left:577px;top:54px;width:150.6px;height:345px;background:#ececec;border-left:0.6px solid #d8d8d8;border-right:0.6px solid #d0d0d0"></div>
<div class="a" style="left:577px;top:54px;width:150.6px;height:11.8px;background:#d6d6d6;border-bottom:0.5px solid #c4c4c4;border-top:0.6px solid #c8c8c8"></div>
<svg style="left:578.7px;top:55.6px" width="6.6" height="6.6" viewBox="0 0 6.6 6.6"><circle cx="3.3" cy="3.3" r="3.2" fill="#3c3c3c"/><path d="M1.9 1.9l2.8 2.8M4.7 1.9l-2.8 2.8" stroke="#f0f0f0" stroke-width="1.15" stroke-linecap="round"/></svg>
<svg style="left:587.7px;top:55.6px" width="6.6" height="6.6" viewBox="0 0 6.6 6.6"><circle cx="3.3" cy="3.3" r="3.2" fill="#3c3c3c"/><rect x="1.9" y="2.1" width="2.8" height="2.6" rx="0.5" fill="none" stroke="#e8e8e8" stroke-width="0.7"/><path d="M2.8 3.9l1.2-1.2" stroke="#e8e8e8" stroke-width="0.6"/></svg>
<div class="t" style="left:621px;width:80px;text-align:center;top:56.9px;font-size:6.05px;color:#2a2a2a">Editor di proprietà</div>
<div class="t" style="left:584px;top:74.9px;font-size:6.75px;color:#111">Selezione:</div>
<div class="inp" style="left:619.8px;top:72.2px;width:100.2px;height:10.2px;border-radius:2.2px"></div>
<div class="val" style="left:621.2px;top:75px;font-size:6.65px">Nessuna selezione</div>
<div class="bl" style="left:711.3px;top:73.2px"></div><svg style="left:711.3px;top:73.2px" width="8.2" height="8" viewBox="0 0 8.2 8"><path d="M2.7 3.2l1.4-1.4 1.4 1.4M2.7 4.8l1.4 1.4 1.4-1.4" stroke="#fff" stroke-width="0.8" fill="none" stroke-linecap="round" stroke-linejoin="round"/></svg>
<div class="a" style="left:584.2px;top:91.3px;width:136.6px;height:93.2px;background:#e4e4e4;border:0.6px solid #d9d9d9;border-radius:2.5px"></div>
<div class="t" style="left:587.6px;top:86.4px;font-size:5.95px;color:#b4b4b4">Proprietà generali</div>
<div class="lbl" style="left:560px;width:83.2px;top:100.7px">Livello:</div>
<div class="lbl" style="left:560px;width:83.2px;top:113.8px">Colore:</div>
<div class="lbl" style="left:560px;width:83.2px;top:125.5px">Spessore di linea:</div>
<div class="lbl" style="left:560px;width:83.2px;top:137.3px">Tipo di linea:</div>
<div class="lbl" style="left:560px;width:83.2px;top:149.1px">Scala del tipo:</div>
<div class="lbl" style="left:560px;width:83.2px;top:160.7px">Ordine di disegno:</div>
<div class="lbl" style="left:560px;width:83.2px;top:172.2px">Manico:</div>
<div class="inp" style="left:644.8px;top:98.4px;width:56.8px;height:9.6px;border-radius:2.2px"></div>
<div class="bl" style="left:693.2px;top:99.2px"></div><svg style="left:693.2px;top:99.2px" width="8.2" height="8" viewBox="0 0 8.2 8"><path d="M2.7 3.2l1.4-1.4 1.4 1.4M2.7 4.8l1.4 1.4 1.4-1.4" stroke="#fff" stroke-width="0.8" fill="none" stroke-linecap="round" stroke-linejoin="round"/></svg>
<div class="a" style="left:703.3px;top:96.2px;width:13.4px;height:13px;background:#eaeaea;border:0.6px solid #d0d0d0;border-radius:2px"></div>
<svg style="left:706.4px;top:99.8px" width="7.4" height="6" viewBox="0 0 7.4 6"><path d="M0.4 0.8h6.6M0.4 2.9h6.6M0.4 5h6.6" stroke="#b8b8b8" stroke-width="0.8"/></svg>
<div class="inp" style="left:644.8px;top:111.7px;width:70.8px;height:9.4px;border-radius:2.2px"></div>
<div class="bl" style="left:707.2px;top:112.4px"></div><svg style="left:707.2px;top:112.4px" width="8.2" height="8" viewBox="0 0 8.2 8"><path d="M2.7 3.2l1.4-1.4 1.4 1.4M2.7 4.8l1.4 1.4 1.4-1.4" stroke="#fff" stroke-width="0.8" fill="none" stroke-linecap="round" stroke-linejoin="round"/></svg>
<div class="inp" style="left:644.8px;top:123.3px;width:70.8px;height:9.4px;border-radius:2.2px"></div>
<div class="bl" style="left:707.2px;top:124px"></div><svg style="left:707.2px;top:124px" width="8.2" height="8" viewBox="0 0 8.2 8"><path d="M2.7 3.2l1.4-1.4 1.4 1.4M2.7 4.8l1.4 1.4 1.4-1.4" stroke="#fff" stroke-width="0.8" fill="none" stroke-linecap="round" stroke-linejoin="round"/></svg>
<div class="inp" style="left:644.8px;top:135.1px;width:70.8px;height:9.4px;border-radius:2.2px"></div>
<div class="bl" style="left:707.2px;top:135.8px"></div><svg style="left:707.2px;top:135.8px" width="8.2" height="8" viewBox="0 0 8.2 8"><path d="M2.7 3.2l1.4-1.4 1.4 1.4M2.7 4.8l1.4 1.4 1.4-1.4" stroke="#fff" stroke-width="0.8" fill="none" stroke-linecap="round" stroke-linejoin="round"/></svg>
<div class="a" style="left:646.4px;top:113px;width:7.4px;height:6.2px;background:#fff;border:0.5px solid #a6a6a6"></div>
<div class="val" style="left:656.6px;top:114.2px">Da livello</div>
<div class="a" style="left:646.6px;top:127.8px;width:7px;height:0.7px;background:#7a7a7a"></div>
<div class="val" style="left:656.6px;top:125.8px">Da livello</div>
<div class="val" style="left:646px;top:137px">Da livello</div>
<div class="inp" style="left:644.8px;top:147.2px;width:70.8px;height:8.8px;border-radius:1px"></div>
<div class="inp" style="left:644.8px;top:158.8px;width:70.8px;height:8.8px;border-radius:1px"></div>
<div class="inp" style="left:644.8px;top:170.3px;width:70.8px;height:8.8px;border-radius:1px"></div>
<div class="a" style="left:727.6px;top:54px;width:22.4px;height:345px;background:linear-gradient(90deg,#e8e8e8,#dcdcdc 45%,#c2c2c2)"></div>
<svg style="left:731px;top:58px" width="14" height="1.2" viewBox="0 0 14 1.2"><rect x="0.2" y="0" width="1.1" height="1.1" fill="#8e8e8e"/><rect x="3.3" y="0" width="1.1" height="1.1" fill="#8e8e8e"/><rect x="6.4" y="0" width="1.1" height="1.1" fill="#8e8e8e"/><rect x="9.5" y="0" width="1.1" height="1.1" fill="#8e8e8e"/><rect x="12.6" y="0" width="1.1" height="1.1" fill="#8e8e8e"/></svg>
<div class="sel" style="left:728.4px;top:60.6px;width:21.6px;height:20.8px;background:#b2b2b2;border-radius:2.5px 0 0 2.5px"></div>
<div class="sel" style="left:728.4px;top:134.8px;width:21.6px;height:20.8px;background:#b2b2b2;border-radius:2.5px 0 0 2.5px"></div>
<div class="sel" style="left:728.4px;top:209.2px;width:21.6px;height:20.8px;background:#b2b2b2;border-radius:2.5px 0 0 2.5px"></div>
<div class="a" style="left:729.5px;top:130.4px;width:19px;height:1px;background:repeating-linear-gradient(90deg,#a8a8a8 0 1.9px,transparent 1.9px 3px)"></div>
<div class="a" style="left:729.5px;top:205.4px;width:19px;height:1px;background:repeating-linear-gradient(90deg,#a8a8a8 0 1.9px,transparent 1.9px 3px)"></div>
<svg style="left:731.4px;top:63.3px" width="14.2" height="14.2" viewBox="0 0 14.2 14.2"><rect x="0.3" y="0.3" width="13.6" height="13.6" fill="#fff" stroke="#8c8c8c" stroke-width="0.6"/><rect x="0.3" y="0.3" width="13.6" height="2.4" fill="#0c0c0c"/><rect x="0.9" y="0.8" width="1.3" height="1.3" fill="#fff"/><path d="M4.6 7.6l3-2 2.4 0v4l-3 2.2h-2.4z" fill="#c4c4c4" stroke="#7a7a7a" stroke-width="0.5"/><path d="M6.8 7.6l2.8-1.6v3.2l-2.8 1.8z" fill="#f4b0b8" stroke="none"/></svg>
<svg style="left:731.4px;top:87px" width="14.2" height="14.2" viewBox="0 0 14.2 14.2"><rect x="0.3" y="0.3" width="13.6" height="13.6" fill="#fff" stroke="#8c8c8c" stroke-width="0.6"/><rect x="0.3" y="0.3" width="13.6" height="2.4" fill="#0c0c0c"/><rect x="0.9" y="0.8" width="1.3" height="1.3" fill="#fff"/><rect x="4" y="5.4" width="4.6" height="3.8" fill="#f0dc90" stroke="#a08830" stroke-width="0.5"/><rect x="6" y="7" width="4.6" height="3.8" fill="#f0dc90" stroke="#a08830" stroke-width="0.5"/><rect x="6.2" y="7.2" width="2.2" height="1.8" fill="#9a9a9a"/></svg>
<svg style="left:731.4px;top:110px" width="14.2" height="14.2" viewBox="0 0 14.2 14.2"><rect x="0.3" y="0.3" width="13.6" height="13.6" fill="#fff" stroke="#8c8c8c" stroke-width="0.6"/><rect x="0.3" y="0.3" width="13.6" height="2.4" fill="#0c0c0c"/><rect x="0.9" y="0.8" width="1.3" height="1.3" fill="#fff"/><rect x="3" y="5" width="8.2" height="5.6" rx="0.6" fill="#f8f8f4" stroke="#c4d4ea" stroke-width="0.7"/></svg>
<svg style="left:731.4px;top:138px" width="14.2" height="14.2" viewBox="0 0 14.2 14.2"><rect x="0.3" y="0.3" width="13.6" height="13.6" fill="#fff" stroke="#8c8c8c" stroke-width="0.6"/><rect x="0.3" y="0.3" width="13.6" height="2.4" fill="#0c0c0c"/><rect x="0.9" y="0.8" width="1.3" height="1.3" fill="#fff"/><path d="M2.2 5.1h1.6M2.2 8h1.6M2.2 10.9h1.6" stroke="#111" stroke-width="1.5"/><path d="M4.6 5.1h7.4M4.6 8h7.4M4.6 10.9h7.4" stroke="#b0b0b0" stroke-width="1.2"/><path d="M1 6.6h12M1 9.5h12" stroke="#444" stroke-width="0.4"/></svg>
<svg style="left:731.4px;top:161.2px" width="14.2" height="14.2" viewBox="0 0 14.2 14.2"><rect x="0.3" y="0.3" width="13.6" height="13.6" fill="#fff" stroke="#8c8c8c" stroke-width="0.6"/><rect x="0.3" y="0.3" width="13.6" height="2.4" fill="#0c0c0c"/><rect x="0.9" y="0.8" width="1.3" height="1.3" fill="#fff"/><path d="M3.6 4.8h7l-2.4 2.8v4h-2.2v-4z" fill="#b8b8b8" stroke="#707070" stroke-width="0.5"/><path d="M3.6 4.8h7v1h-7z" fill="#606060"/></svg>
<svg style="left:731.4px;top:184.4px" width="14.2" height="14.2" viewBox="0 0 14.2 14.2"><rect x="0.3" y="0.3" width="13.6" height="13.6" fill="#fff" stroke="#8c8c8c" stroke-width="0.6"/><rect x="0.3" y="0.3" width="13.6" height="2.4" fill="#0c0c0c"/><rect x="0.9" y="0.8" width="1.3" height="1.3" fill="#fff"/><path d="M3.4 4.8v6.6" stroke="#888" stroke-width="0.5"/><rect x="5.6" y="5.6" width="4.8" height="4.4" rx="1" fill="#444" stroke="#222" stroke-width="0.4"/><path d="M7 6.6h3M7 7.8h3M7 9h3" stroke="#ccc" stroke-width="0.5"/><path d="M2.2 7.9h9.6" stroke="#f08080" stroke-width="0.4"/></svg>
<svg style="left:731.4px;top:212.8px" width="14.2" height="14.2" viewBox="0 0 14.2 14.2"><rect x="0.3" y="0.3" width="13.6" height="13.6" fill="#fff" stroke="#8c8c8c" stroke-width="0.6"/><rect x="0.3" y="0.3" width="13.6" height="2.4" fill="#0c0c0c"/><rect x="0.9" y="0.8" width="1.3" height="1.3" fill="#fff"/><path d="M2.4 5.2h6.4M2.4 6.8h5.4M2.4 8.6h7.4M2.4 10h6" stroke="#bcbcbc" stroke-width="0.7" stroke-dasharray="2.2 0.5"/><rect x="0.6" y="11.2" width="13" height="2.6" fill="#f4f4f4" stroke="#555" stroke-width="0.4"/><path d="M5 12.6h7" stroke="#555" stroke-width="0.7"/></svg>
<svg style="left:731.4px;top:235.8px" width="14.2" height="14.2" viewBox="0 0 14.2 14.2"><rect x="0.3" y="0.3" width="13.6" height="13.6" fill="#fff" stroke="#8c8c8c" stroke-width="0.6"/><rect x="0.3" y="0.3" width="13.6" height="2.4" fill="#0c0c0c"/><rect x="0.9" y="0.8" width="1.3" height="1.3" fill="#fff"/><rect x="4" y="4.6" width="6.4" height="7.8" rx="0.6" fill="#d09848" stroke="#a87428" stroke-width="0.4"/><rect x="4.9" y="5.6" width="4.6" height="6" fill="#f2f2f2"/><rect x="5.8" y="4" width="2.8" height="1.4" fill="#9a9a9a"/></svg>
<div class="a" style="left:0;top:398.8px;width:750px;height:23.2px;background:#dcdcdc;border-top:0.6px solid #c6c6c6"></div>
<div class="st" style="left:1.6px;top:403.9px">9.7917,55.0926</div>
<div class="st" style="left:1.6px;top:413.7px">@9.7917,-14.9074</div>
<div class="a" style="left:125.8px;top:400px;width:0.6px;height:21px;background:#c2c2c2"></div>
<div class="st" style="left:128px;top:403.9px">55.956&lt;80°</div>
<div class="st" style="left:128px;top:413.7px">@17.8356&lt;303°</div>
<div class="a" style="left:253.4px;top:409.6px;width:1.6px;height:1.6px;border-radius:1px;background:#c6c6c6"></div>
<div class="a" style="left:470.2px;top:409.6px;width:1.6px;height:1.6px;border-radius:1px;background:#c6c6c6"></div>
<div class="st" style="left:249px;width:100.4px;text-align:right;top:405.5px">Selezionare entità o regione</div>
<div class="st" style="left:249px;width:100.4px;text-align:right;top:411.5px">Spostare entità o riferimento</div>
<svg style="left:358px;top:402.4px" width="10.4" height="16" viewBox="0 0 10.4 16"><rect x="0.5" y="0.5" width="9.4" height="15" rx="4.2" fill="#fafafa" stroke="#b4b4b4" stroke-width="0.6"/><path d="M0.6 6.2h9.2" stroke="#c4c4c4" stroke-width="0.5"/><rect x="4.3" y="1.2" width="1.8" height="4.2" rx="0.8" fill="#8a8a8a"/></svg>
<div class="st" style="left:475px;top:405.5px">Entità selezionate:</div>
<div class="st" style="left:475px;top:411.5px">1 Linea su livello "0"</div>
</body></html>
